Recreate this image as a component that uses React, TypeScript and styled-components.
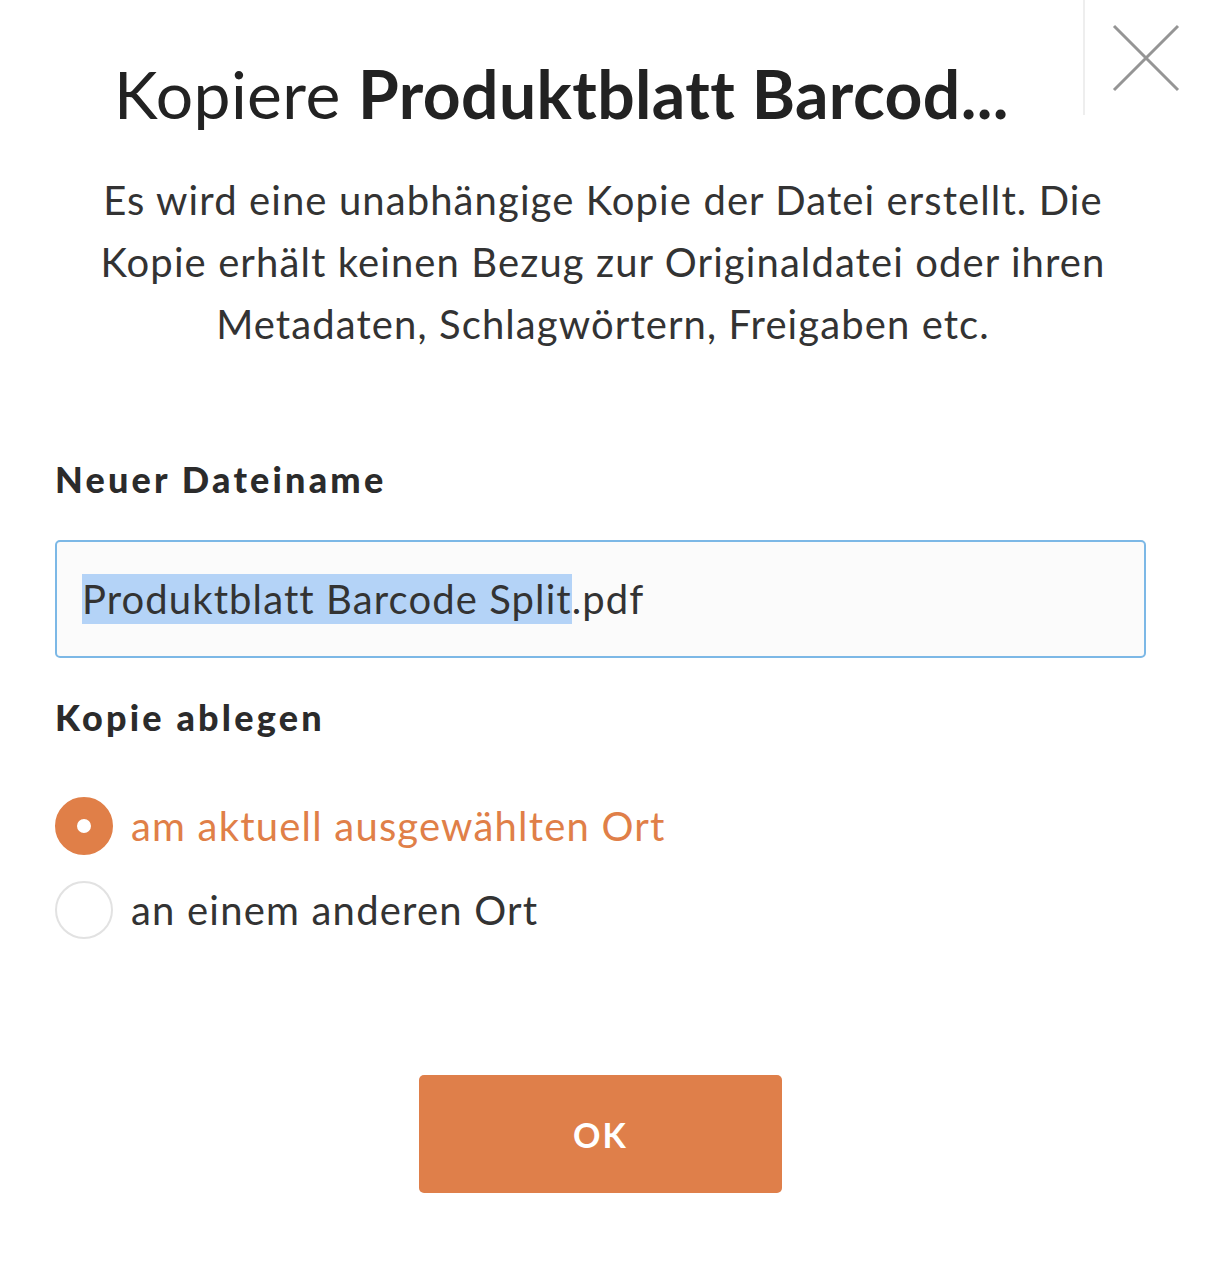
import React, { FC } from "react";
import styled, { createGlobalStyle } from "styled-components";

const GlobalStyle = createGlobalStyle`
  body {
    margin: 0;
    background: #ffffff;
    font-family: Lato, "Open Sans", sans-serif;
    color: #333333;
  }
`;

const Dialog = styled.div`
  width: 1206px;
  height: 1278px;
  box-sizing: border-box;
  background: #ffffff;
`;

const Header = styled.div`
  display: flex;
  align-items: flex-start;
`;

const Title = styled.h1`
  flex: 1;
  margin: 0;
  padding: 54px 0 0 40px;
  text-align: center;
  font-size: 66px;
  line-height: 80px;
  font-weight: 400;
  letter-spacing: 0.4px;
  color: #222222;
  white-space: nowrap;

  strong {
    font-weight: 700;
  }
`;

const CloseArea = styled.button`
  width: 123px;
  height: 115px;
  flex-shrink: 0;
  display: flex;
  align-items: center;
  justify-content: center;
  padding: 0;
  border: none;
  border-left: 2px solid #eeeeee;
  background: transparent;
  cursor: pointer;
`;

const Description = styled.p`
  margin: 35px auto 0;
  max-width: 1040px;
  text-align: center;
  font-size: 40px;
  line-height: 62px;
  letter-spacing: 1.1px;
  color: #333333;
`;

const Form = styled.div`
  padding: 0 60px 0 55px;
`;

const Label = styled.div<{ $top: number }>`
  margin-top: ${(p) => p.$top}px;
  font-size: 36px;
  line-height: 41px;
  font-weight: 900;
  letter-spacing: 3.2px;
  color: #2b2b2b;
`;

const InputBox = styled.div`
  margin-top: 40px;
  height: 118px;
  box-sizing: border-box;
  display: flex;
  align-items: center;
  padding-left: 25px;
  border: 2px solid #7cb8e6;
  border-radius: 5px;
  background: #fbfbfb;
  font-size: 40px;
  line-height: 50px;
  letter-spacing: 1.1px;
  color: #333333;
  white-space: pre;
`;

const Selected = styled.span`
  background: #b4d3f7;
`;

const RadioList = styled.div`
  margin-top: 46px;
  display: flex;
  flex-direction: column;
`;

const RadioRow = styled.label<{ $active?: boolean }>`
  height: 84px;
  display: flex;
  align-items: center;
  gap: 18px;
  font-size: 40px;
  letter-spacing: 1.2px;
  color: ${(p) => (p.$active ? "#e07f48" : "#333333")};
  cursor: pointer;
`;

const RadioDot = styled.span<{ $active?: boolean }>`
  width: 58px;
  height: 58px;
  box-sizing: border-box;
  border-radius: 50%;
  flex-shrink: 0;
  background: #ffffff;
  border: ${(p) => (p.$active ? "22px solid #e07f48" : "2px solid #e2e2e2")};
`;

const Footer = styled.div`
  margin-top: 123px;
  display: flex;
  justify-content: center;
`;

const OkButton = styled.button`
  width: 363px;
  height: 118px;
  border: none;
  border-radius: 5px;
  background: #df7f4a;
  color: #ffffff;
  font-family: Lato, "Open Sans", sans-serif;
  font-size: 34px;
  font-weight: 700;
  letter-spacing: 2px;
  cursor: pointer;
`;

const App: FC = () => {
  return (
    <Dialog>
      <GlobalStyle />
      <Header>
        <Title>
          Kopiere <strong>Produktblatt Barcod...</strong>
        </Title>
        <CloseArea aria-label="Schließen">
          <svg width="68" height="68" viewBox="0 0 68 68">
            <path d="M2 2 L66 66 M66 2 L2 66" stroke="#959595" strokeWidth="3" fill="none" />
          </svg>
        </CloseArea>
      </Header>
      <Description>
        Es wird eine unabhängige Kopie der Datei erstellt. Die Kopie erhält keinen Bezug zur
        Originaldatei oder ihren Metadaten, Schlagwörtern, Freigaben etc.
      </Description>
      <Form>
        <Label $top={104}>Neuer Dateiname</Label>
        <InputBox>
          <Selected>Produktblatt Barcode Split</Selected>.pdf
        </InputBox>
        <Label $top={39}>Kopie ablegen</Label>
        <RadioList>
          <RadioRow $active>
            <RadioDot $active />
            am aktuell ausgewählten Ort
          </RadioRow>
          <RadioRow>
            <RadioDot />
            an einem anderen Ort
          </RadioRow>
        </RadioList>
        <Footer>
          <OkButton>OK</OkButton>
        </Footer>
      </Form>
    </Dialog>
  );
};

export default App;
